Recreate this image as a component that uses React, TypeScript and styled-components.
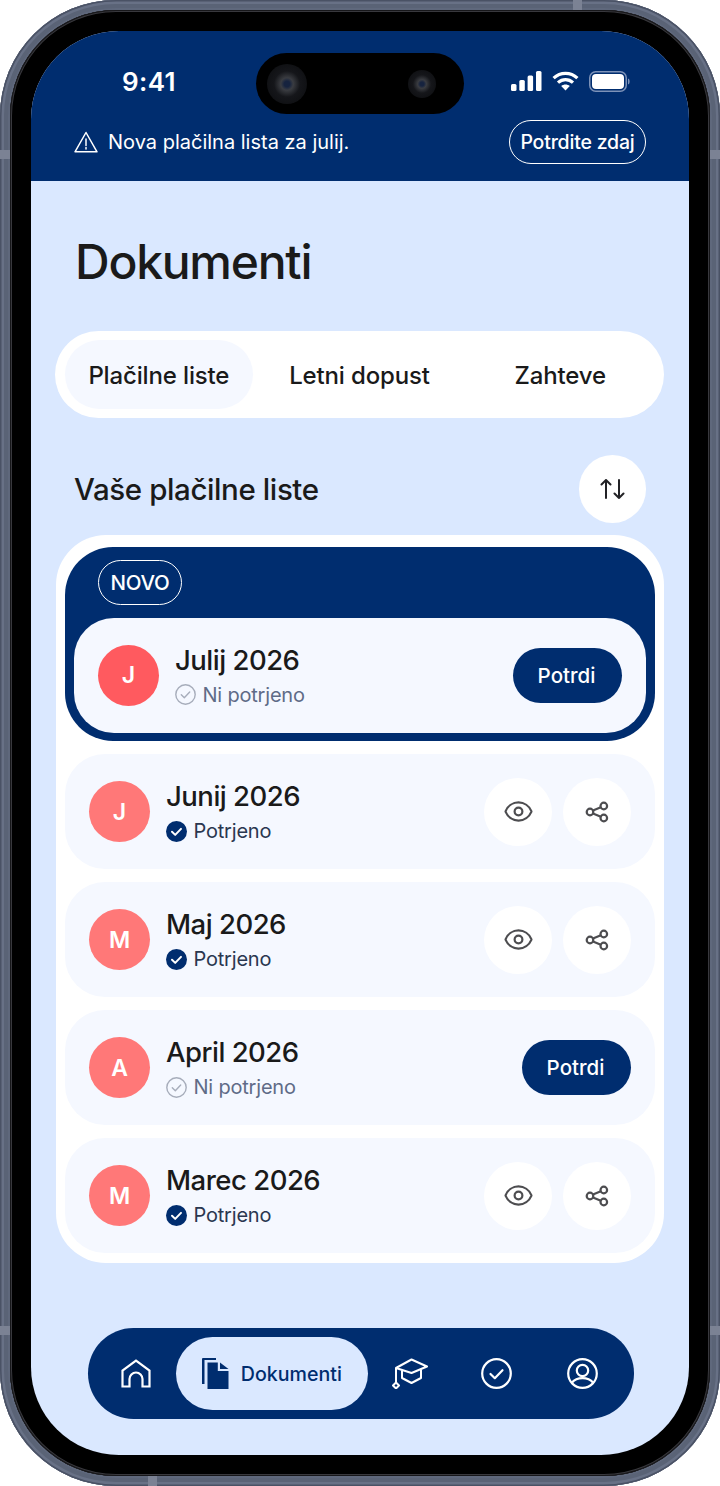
import React from 'react'
import styled, { createGlobalStyle } from 'styled-components'
import { Eye } from 'lucide-react'

const navy = '#002d6f'
const sky = '#dae8ff'

const GlobalStyle = createGlobalStyle`
  html, body {
    margin: 0;
    padding: 0;
    background: #fff;
    font-family: Inter, 'Noto Sans', sans-serif;
    color: #1a1a1a;
  }
  * { box-sizing: border-box; }
`

const Phone = styled.div`
  position: relative;
  width: 720px;
  height: 1486px;
  padding: 10px;
  border-radius: 116px;
  background: #5f687c;
  box-shadow: inset 0 0 0 1.5px #4a5265, inset 0 0 0 4px #687186, inset 0 0 0 8px #5a6376;
`

const Band = styled.span<{ $side: 'left' | 'right' | 'top' | 'bottom'; $at: number }>`
  position: absolute;
  background: #7b8294;
  ${p => (p.$side === 'left' || p.$side === 'right'
    ? `${p.$side}: 0; top: ${p.$at}px; width: 10px; height: 9px;`
    : `${p.$side}: 0; left: ${p.$at}px; width: 9px; height: 10px;`)}
`

const Bezel = styled.div`
  height: 100%;
  padding: 21px;
  border-radius: 106px;
  background: #000;
  box-shadow: inset 0 0 0 1px #17171a, inset 0 0 0 2px #38383d, inset 0 0 0 3px #000;
`

const Screen = styled.div`
  position: relative;
  display: flex;
  flex-direction: column;
  height: 100%;
  overflow: hidden;
  border-radius: 88px;
  background: ${sky};
`

const Island = styled.div`
  position: absolute;
  top: 22px;
  left: 225px;
  display: flex;
  align-items: center;
  justify-content: space-between;
  width: 208px;
  height: 61px;
  padding: 0 28px 0 11px;
  border-radius: 31px;
  background: #000;
`

const Lens = styled.span<{ $size: number }>`
  width: ${p => p.$size}px;
  height: ${p => p.$size}px;
  border-radius: 50%;
  background: radial-gradient(circle, #16233f 0 10%, #3a3c41 22%, #15161a 46%, #0a0b0d 100%);
`

const Header = styled.header`
  display: flex;
  flex-direction: column;
  flex: none;
  height: 150px;
  background: ${navy};
  color: #fff;
`

const StatusBar = styled.div`
  display: flex;
  align-items: center;
  justify-content: space-between;
  height: 38px;
  margin-top: 31px;
  padding: 0 59px 0 91px;
`

const Time = styled.span`
  font-size: 26px;
  font-weight: 600;
  letter-spacing: 0.4px;
`

const StatusIcons = styled.div`
  display: flex;
  align-items: center;
  gap: 10px;
`

const Banner = styled.div`
  display: flex;
  align-items: center;
  justify-content: space-between;
  margin-top: 20px;
  padding: 0 43px;
`

const BannerText = styled.div`
  display: flex;
  align-items: center;
  gap: 10px;
  font-size: 20px;
`

const OutlineButton = styled.button`
  height: 44px;
  padding: 0 10.5px;
  border: 1.7px solid #fff;
  border-radius: 22px;
  background: none;
  color: #fff;
  font: 450 19.5px Inter, sans-serif;
  letter-spacing: -0.2px;
`

const Content = styled.main`
  display: flex;
  flex-direction: column;
  flex: 1;
  padding: 53px 25px 0 24px;
`

const Title = styled.h1`
  margin: 0 0 41px 20px;
  font-size: 48px;
  font-weight: 500;
  line-height: 56px;
  letter-spacing: -1.25px;
`

const Tabs = styled.nav`
  display: flex;
  gap: 13px;
  height: 87px;
  padding: 9px 10px;
  border-radius: 44px;
  background: #fff;
`

const Tab = styled.div<{ $active?: boolean }>`
  display: flex;
  align-items: center;
  justify-content: center;
  width: 188px;
  padding-top: 1px;
  border-radius: 35px;
  background: ${p => (p.$active ? '#f5f8ff' : 'transparent')};
  font-size: 24px;
  font-weight: 500;
  letter-spacing: -0.15px;
`

const SectionRow = styled.div`
  display: flex;
  align-items: center;
  justify-content: space-between;
  margin-top: 37px;
  padding: 0 18px 0 19px;
`

const SectionTitle = styled.h2`
  margin: 0;
  font-size: 29.5px;
  font-weight: 500;
  letter-spacing: -0.4px;
`

const RoundButton = styled.button<{ $width?: number }>`
  display: flex;
  align-items: center;
  justify-content: center;
  width: ${p => p.$width || 68}px;
  height: 68px;
  padding: 0;
  border: 0;
  border-radius: 50%;
  background: #fff;
  color: #4d4d50;
`

const ListCard = styled.section`
  display: flex;
  flex-direction: column;
  gap: 13px;
  margin: 12px 0 0 1px;
  padding: 12px 9px 10px;
  border-radius: 50px;
  background: #fff;
`

const Highlight = styled.div`
  padding: 13px 9px 8.5px;
  border-radius: 48px;
  background: ${navy};
`

const NewBadge = styled.span`
  display: flex;
  align-items: center;
  justify-content: center;
  width: 84px;
  height: 45px;
  margin: 0 0 12.5px 24px;
  border: 1.8px solid #fff;
  border-radius: 23px;
  color: #fff;
  font-size: 20.5px;
  font-weight: 450;
  letter-spacing: -0.3px;
`

const Row = styled.div`
  display: flex;
  align-items: center;
  gap: 16px;
  height: 115px;
  padding: 0 24px;
  border-radius: 40px;
  background: #f5f8ff;
`

const Avatar = styled.div<{ $strong?: boolean }>`
  display: flex;
  align-items: center;
  justify-content: center;
  flex: none;
  width: 61px;
  height: 61px;
  border-radius: 50%;
  background: ${p => (p.$strong ? '#ff5a5f' : '#ff7878')};
  color: #fff;
  font-size: 23px;
  font-weight: 600;
`

const RowText = styled.div`
  display: flex;
  flex-direction: column;
  flex: 1;
  gap: 5px;
`

const RowTitle = styled.div`
  font-size: 27.5px;
  font-weight: 500;
  line-height: 34px;
  letter-spacing: -0.5px;
`

const Status = styled.div<{ $done: boolean }>`
  display: flex;
  align-items: center;
  gap: 6.5px;
  color: ${p => (p.$done ? '#2a3750' : '#5f6b87')};
  font-size: 20px;
  line-height: 26px;
  letter-spacing: -0.2px;
`

const Actions = styled.div`
  display: flex;
  gap: 11px;
`

const ConfirmButton = styled.button`
  width: 109px;
  height: 55px;
  padding: 0 2px 0 0;
  border: 0;
  border-radius: 28px;
  background: ${navy};
  color: #fff;
  font: 500 20.5px Inter, sans-serif;
`

const BottomNav = styled.nav`
  display: flex;
  align-items: center;
  width: 546px;
  height: 91px;
  margin: 65px 0 0 33px;
  padding: 0 9px;
  border-radius: 46px;
  background: ${navy};
`

const NavSlot = styled.div<{ $width: number }>`
  display: flex;
  align-items: center;
  justify-content: center;
  width: ${p => p.$width}px;
`

const ActiveNav = styled.div`
  display: flex;
  align-items: center;
  gap: 12px;
  width: 192px;
  height: 73px;
  padding-left: 26px;
  border-radius: 37px;
  background: ${sky};
  color: ${navy};
  font-size: 19.6px;
  font-weight: 450;
`

const SignalIcon = () => (
  <svg width="31" height="20" viewBox="0 0 31 20" fill="#fff">
    <rect x="0" y="13" width="5.5" height="7" rx="1.5" />
    <rect x="8.3" y="9" width="5.5" height="11" rx="1.5" />
    <rect x="16.6" y="4.5" width="5.5" height="15.5" rx="1.5" />
    <rect x="25" y="0" width="5.5" height="20" rx="1.5" />
  </svg>
)

const WifiIcon = () => (
  <svg width="27" height="20" viewBox="0 0 27 20" fill="none" stroke="#fff" strokeWidth="3.2">
    <path d="M1.6 7.2C8.4 .7 18.6 .7 25.4 7.2" />
    <path d="M6 11.6c4.4-4 10.6-4 15 0" />
    <path d="M13.5 19.5l-4.3-4.4c2.5-2 6.1-2 8.6 0z" fill="#fff" stroke="none" />
  </svg>
)

const BatteryIcon = () => (
  <svg width="41" height="21" viewBox="0 0 41 21" fill="none">
    <rect x="0.75" y="0.75" width="36.5" height="19.5" rx="6" stroke="#7d92b8" strokeWidth="1.5" />
    <rect x="3" y="3" width="32" height="15" rx="4" fill="#fff" />
    <path d="M39 7.5c1.2.4 1.6 1.5 1.6 3s-.4 2.6-1.6 3z" fill="#7d92b8" />
  </svg>
)

const WarningIcon = () => (
  <svg width="24" height="22" viewBox="0 0 24 22" fill="none" stroke="#fff" strokeWidth="1.5" strokeLinejoin="round">
    <path d="M12 1.5L23 20.8H1z" />
    <path d="M12 8v6.5M12 16.5v1.5" strokeLinecap="round" />
  </svg>
)

const SortIcon = () => (
  <svg width="25" height="20" viewBox="0 0 25 20" fill="none" stroke="#222226" strokeWidth="2" strokeLinecap="round" strokeLinejoin="round">
    <path d="M6 19V1M1.5 5.500L6 1l4.500 4.500" />
    <path d="M19 1v18M14.500 14.500L19 19l4.500-4.500" />
  </svg>
)

const ShareIcon = () => (
  <svg width="24" height="22" viewBox="0 0 24 22" fill="none" stroke="#4d4d50" strokeWidth="2.2">
    <circle cx="5" cy="11" r="3.3" />
    <circle cx="18.8" cy="5" r="3.3" />
    <circle cx="18.8" cy="17" r="3.3" />
    <path d="M8 9.600l7.800-3.300M8 12.400l7.800 3.300" />
  </svg>
)

const DoneIcon = () => (
  <svg width="21" height="21" viewBox="0 0 21 21">
    <circle cx="10.5" cy="10.5" r="10.5" fill={navy} />
    <path d="M6 10.8l3.2 3.1 5.8-6" fill="none" stroke="#fff" strokeWidth="2" strokeLinecap="round" strokeLinejoin="round" />
  </svg>
)

const PendingIcon = () => (
  <svg width="21" height="21" viewBox="0 0 21 21" fill="none" stroke="#a7adbb" strokeWidth="1.4" strokeLinecap="round" strokeLinejoin="round">
    <circle cx="10.5" cy="10.5" r="9.7" />
    <path d="M6.3 10.8l3 3 5.4-5.700" />
  </svg>
)

const HomeIcon = () => (
  <svg width="30" height="29" viewBox="0 0 30 29" fill="none" stroke="#fff" strokeWidth="2.2">
    <path d="M1.5 27.5V11.500L15 1.500l13.500 10v16h-7V20a6.500 6.500 0 0 0-13 0v7.500z" />
  </svg>
)

const DocumentIcon = () => (
  <svg width="27" height="31" viewBox="0 0 27 31" fill={navy}>
    <path d="M1 0h13v2H2.500v24H0V1a1 1 0 0 1 1-1z" />
    <path d="M5.5 4.500h10.300V13H26.500v18h-21z" />
    <path d="M18 4.500l8.500 6.500H18z" />
  </svg>
)

const CapIcon = () => (
  <svg width="36" height="31" viewBox="0 0 36 31" fill="none" stroke="#fff" strokeWidth="2" strokeLinejoin="round">
    <path d="M19.5 1.500L35 8.500l-15.500 6.500L4 10z" />
    <path d="M10 12.500v7.500l9.500 5 9.500-5v-8" />
    <path d="M4 10v15" />
    <path d="M4 24.500l3 3-3 3-3-3z" />
  </svg>
)

const CheckCircleIcon = () => (
  <svg width="31" height="31" viewBox="0 0 31 31" fill="none" stroke="#fff" strokeWidth="2.2" strokeLinecap="round" strokeLinejoin="round">
    <circle cx="15.5" cy="15.5" r="14.3" />
    <path d="M9.5 16l4.300 4.200 7.700-8" />
  </svg>
)

const ProfileIcon = () => (
  <svg width="31" height="31" viewBox="0 0 31 31" fill="none" stroke="#fff" strokeWidth="2.2">
    <circle cx="15.5" cy="15.5" r="14.3" />
    <circle cx="15.5" cy="12.5" r="5.7" />
    <path d="M5 24.5c2.500-3 6-4.300 10.500-4.300s8 1.300 10.500 4.300" />
  </svg>
)

type Slip = { letter: string; title: string; done: boolean }

const slips: Slip[] = [
  { letter: 'J', title: 'Junij 2026', done: true },
  { letter: 'M', title: 'Maj 2026', done: true },
  { letter: 'A', title: 'April 2026', done: false },
  { letter: 'M', title: 'Marec 2026', done: true },
]

const SlipText = ({ title, done }: { title: string; done: boolean }) => (
  <RowText>
    <RowTitle>{title}</RowTitle>
    <Status $done={done}>
      {done ? <DoneIcon /> : <PendingIcon />}
      {done ? 'Potrjeno' : 'Ni potrjeno'}
    </Status>
  </RowText>
)

const SlipRow = ({ slip }: { slip: Slip }) => (
  <Row>
    <Avatar>{slip.letter}</Avatar>
    <SlipText title={slip.title} done={slip.done} />
    {slip.done ? (
      <Actions>
        <RoundButton><Eye size={31} strokeWidth={1.7} /></RoundButton>
        <RoundButton><ShareIcon /></RoundButton>
      </Actions>
    ) : (
      <ConfirmButton>Potrdi</ConfirmButton>
    )}
  </Row>
)

const App: React.FC = () => (
  <>
    <GlobalStyle />
    <Phone>
      <Band $side="left" $at={150} />
      <Band $side="left" $at={1326} />
      <Band $side="right" $at={150} />
      <Band $side="right" $at={1326} />
      <Band $side="top" $at={573} />
      <Band $side="bottom" $at={148} />
      <Bezel>
        <Screen>
          <Island>
            <Lens $size={40} />
            <Lens $size={28} />
          </Island>
          <Header>
            <StatusBar>
              <Time>9:41</Time>
              <StatusIcons>
                <SignalIcon />
                <WifiIcon />
                <BatteryIcon />
              </StatusIcons>
            </StatusBar>
            <Banner>
              <BannerText>
                <WarningIcon />
                Nova plačilna lista za julij.
              </BannerText>
              <OutlineButton>Potrdite zdaj</OutlineButton>
            </Banner>
          </Header>
          <Content>
            <Title>Dokumenti</Title>
            <Tabs>
              <Tab $active>Plačilne liste</Tab>
              <Tab>Letni dopust</Tab>
              <Tab>Zahteve</Tab>
            </Tabs>
            <SectionRow>
              <SectionTitle>Vaše plačilne liste</SectionTitle>
              <RoundButton $width={67.5}><SortIcon /></RoundButton>
            </SectionRow>
            <ListCard>
              <Highlight>
                <NewBadge>NOVO</NewBadge>
                <Row>
                  <Avatar $strong>J</Avatar>
                  <SlipText title="Julij 2026" done={false} />
                  <ConfirmButton>Potrdi</ConfirmButton>
                </Row>
              </Highlight>
              {slips.map(slip => <SlipRow key={slip.title} slip={slip} />)}
            </ListCard>
            <BottomNav>
              <NavSlot $width={79}><HomeIcon /></NavSlot>
              <ActiveNav><DocumentIcon />Dokumenti</ActiveNav>
              <NavSlot $width={86}><CapIcon /></NavSlot>
              <NavSlot $width={86}><CheckCircleIcon /></NavSlot>
              <NavSlot $width={86}><ProfileIcon /></NavSlot>
            </BottomNav>
          </Content>
        </Screen>
      </Bezel>
    </Phone>
  </>
)

export default App
